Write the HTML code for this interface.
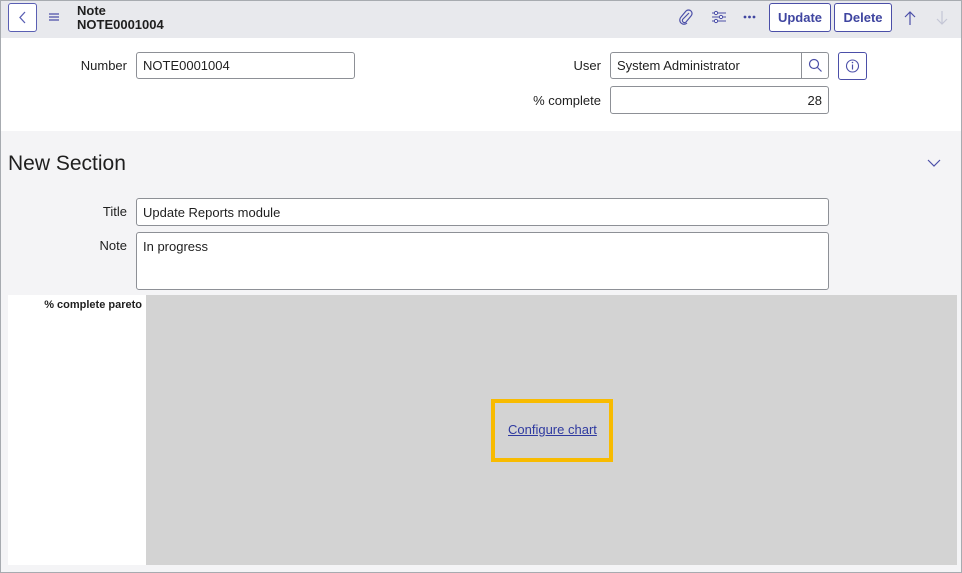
<!DOCTYPE html>
<html><head><meta charset="utf-8"><style>
*{box-sizing:border-box;margin:0;padding:0}
body{width:962px;height:573px;overflow:hidden;font-family:"Liberation Sans",sans-serif;background:#fff;position:relative;color:#1f1f1f}
.frame{position:absolute;left:0;top:0;width:962px;height:573px;border:1px solid #a7abb0;pointer-events:none;z-index:10}
.hdr{position:absolute;left:0;top:0;width:962px;height:38px;background:#e8e9ed}
.a{position:absolute}
.inp{position:absolute;background:#fff;border:1px solid #8d9096;border-radius:3px;font-size:13px;padding:0 6px;display:flex;align-items:center}
.lbl{position:absolute;font-size:13px;text-align:right}
.btn{position:absolute;top:3px;height:29px;border:1px solid #4b4fa8;border-radius:3px;background:#fff;color:#3f45a0;font-weight:bold;font-size:13px;display:flex;align-items:center;justify-content:center}
</style></head><body>
<div class="hdr"></div>
<div class="a" style="left:8px;top:3px;width:29px;height:29px;border:1px solid #5a5fb3;border-radius:3px;background:#fff"></div>
<svg class="a" style="left:8px;top:3px" width="29" height="29"><path d="M17 9 L12 14.5 L17 20" fill="none" stroke="#5a5fb3" stroke-width="1.3"/></svg>
<svg class="a" style="left:48px;top:12px" width="12" height="10"><path d="M1 2H11M1 5H11M1 8H11" stroke="#4b4fa8" stroke-width="1.2"/></svg>
<div class="a" style="left:77px;top:4px;font-size:13px;font-weight:bold;line-height:14px">Note<br>NOTE0001004</div>
<svg class="a" style="left:678px;top:9px" width="16" height="16"><path d="M11 4 L5 10 a2 2 0 0 0 3 3 L13 7 a3.2 3.2 0 0 0 -5 -5 L3 8 a4 4 0 0 0 6 6" fill="none" stroke="#4b4fa8" stroke-width="1.2"/></svg>
<svg class="a" style="left:711px;top:10px" width="16" height="14"><path d="M1 3H15M1 7H15M1 11H15" stroke="#4b4fa8" stroke-width="1.1"/><circle cx="5" cy="3" r="1.6" fill="#fff" stroke="#4b4fa8"/><circle cx="10" cy="7" r="1.6" fill="#fff" stroke="#4b4fa8"/><circle cx="5" cy="11" r="1.6" fill="#fff" stroke="#4b4fa8"/></svg>
<svg class="a" style="left:743px;top:14px" width="14" height="6"><circle cx="2" cy="3" r="1.4" fill="#3f45a0"/><circle cx="6.5" cy="3" r="1.4" fill="#3f45a0"/><circle cx="11" cy="3" r="1.4" fill="#3f45a0"/></svg>
<div class="btn" style="left:769px;width:62px">Update</div>
<div class="btn" style="left:834px;width:58px">Delete</div>
<svg class="a" style="left:903px;top:10px" width="14" height="16"><path d="M7 15V2M2 7L7 2L12 7" fill="none" stroke="#4b4fa8" stroke-width="1.2"/></svg>
<svg class="a" style="left:935px;top:10px" width="14" height="16"><path d="M7 1V14M2 9L7 14L12 9" fill="none" stroke="#c4c6d6" stroke-width="1.2"/></svg>

<div class="lbl" style="left:40px;width:87px;top:58px">Number</div>
<div class="inp" style="left:136px;top:52px;width:219px;height:27px">NOTE0001004</div>
<div class="lbl" style="left:500px;width:101px;top:58px">User</div>
<div class="inp" style="left:610px;top:52px;width:193px;height:27px;border-radius:3px 0 0 3px">System Administrator</div>
<div class="a" style="left:801px;top:52px;width:28px;height:27px;border:1px solid #8d9096;border-radius:0 3px 3px 0;background:#fff"></div>
<svg class="a" style="left:808px;top:58px" width="15" height="15"><circle cx="6" cy="6" r="4.5" fill="none" stroke="#4b4fa8" stroke-width="1.2"/><path d="M9.5 9.5L13.5 13.5" stroke="#4b4fa8" stroke-width="1.2"/></svg>
<div class="a" style="left:838px;top:52px;width:29px;height:28px;border:1px solid #4b4fa8;border-radius:3px;background:#fff"></div>
<svg class="a" style="left:838px;top:52px" width="29" height="28"><circle cx="14.5" cy="14" r="6" fill="none" stroke="#4b4fa8" stroke-width="1.1"/><path d="M14.5 12.5V17.5" stroke="#4b4fa8" stroke-width="1.2"/><circle cx="14.5" cy="10.5" r="0.8" fill="#4b4fa8"/></svg>
<div class="lbl" style="left:500px;width:101px;top:93px">% complete</div>
<div class="inp" style="left:610px;top:86px;width:219px;height:28px;justify-content:flex-end">28</div>

<div class="a" style="left:0;top:131px;width:962px;height:442px;background:#f4f4f6"></div>
<div class="a" style="left:8px;top:152px;font-size:21px;color:#1f1f1f">New Section</div>
<svg class="a" style="left:927px;top:158px" width="14" height="10"><path d="M1 2L7 8L13 2" fill="none" stroke="#4b4fa8" stroke-width="1.2"/></svg>
<div class="lbl" style="left:40px;width:87px;top:204px">Title</div>
<div class="inp" style="left:136px;top:198px;width:693px;height:28px">Update Reports module</div>
<div class="lbl" style="left:40px;width:87px;top:238px">Note</div>
<div class="inp" style="left:136px;top:232px;width:693px;height:58px;align-items:flex-start;padding-top:6px">In progress</div>

<div class="a" style="left:8px;top:295px;width:949px;height:270px;background:#fff"></div>
<div class="a" style="left:146px;top:295px;width:811px;height:270px;background:#d3d3d3"></div>
<div class="a" style="left:8px;top:299px;width:134px;text-align:right;font-size:11px;font-weight:bold">% complete pareto</div>
<div class="a" style="left:491px;top:399px;width:122px;height:63px;border:4px solid #f8bb00"></div>
<div class="a" style="left:508px;top:422px;font-size:13px;color:#2f3aa0;text-decoration:underline">Configure chart</div>
<div class="frame"></div>
</body></html>
